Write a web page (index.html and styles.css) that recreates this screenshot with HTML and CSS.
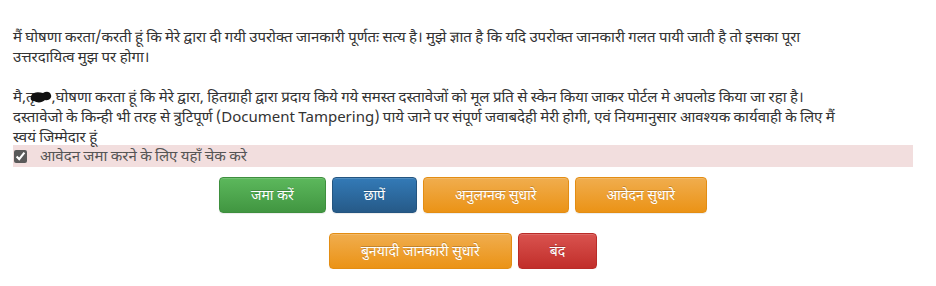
FILE: index.html
```html
<!DOCTYPE html>
<html lang="hi">
<head>
<meta charset="utf-8">
<title>घोषणा</title>
<link rel="stylesheet" href="styles.css">
</head>
<body>
<div class="panel">
  <p class="declaration">मैं घोषणा करता/करती हूं कि मेरे द्वारा दी गयी उपरोक्त जानकारी पूर्णतः सत्य है। मुझे ज्ञात है कि यदि उपरोक्त जानकारी गलत पायी जाती है तो इसका पूरा<br>उत्तरदायित्व मुझ पर होगा।<br><br>मै,तृ<svg class="blot" viewBox="0 0 22 12" width="22" height="12"><path d="M1 5 C4 0 9 1 13 2 C16 0 20 0 21 4 C22 7 19 10 15 9 C12 12 7 12 4 10 C1 10 0 8 1 5 Z" fill="#111"/></svg>,घोषणा करता हूं कि मेरे द्वारा, हितग्राही द्वारा प्रदाय किये गये समस्त दस्तावेजों को मूल प्रति से स्केन किया जाकर पोर्टल मे अपलोड किया जा रहा है।<br>दस्तावेजो के किन्ही भी तरह से त्रुटिपूर्ण (Document Tampering) पाये जाने पर संपूर्ण जवाबदेही मेरी होगी, एवं नियमानुसार आवश्यक कार्यवाही के लिए मैं<br>स्वयं जिम्मेदार हूं</p>
  <label class="confirm">
    <input type="checkbox" class="confirm-box" checked>
    <span class="confirm-text">आवेदन जमा करने के लिए यहाँ चेक करे</span>
  </label>
  <div class="actions">
    <button class="btn btn-success">जमा करें</button>
    <button class="btn btn-primary">छापें</button>
    <button class="btn btn-warning">अनुलग्नक सुधारे</button>
    <button class="btn btn-warning">आवेदन सुधारे</button>
  </div>
  <div class="actions actions-second">
    <button class="btn btn-warning">बुनयादी जानकारी सुधारे</button>
    <button class="btn btn-danger">बंद</button>
  </div>
</div>
</body>
</html>
```
FILE: styles.css
```css
* { box-sizing: border-box; }
body {
  margin: 0;
  background: #fff;
  font-family: "Noto Sans Devanagari", "Lohit Devanagari", "Noto Sans", "Liberation Sans", sans-serif;
  font-size: 15px;
  line-height: 20px;
  color: #333;
}
.panel {
  width: 900px;
  margin-left: 13px;
  padding-top: 29px;
}
.declaration {
  margin: 0 0 -4px;
  white-space: nowrap;
  word-spacing: -0.5px;
}
.blot {
  display: inline-block;
  vertical-align: -1px;
  margin-left: -5px;
}
.confirm {
  display: flex;
  align-items: center;
  gap: 13px;
  height: 22px;
  background: #f2dede;
  color: #555;
  padding-left: 1px;
}
.confirm-text {
  padding-top: 3px;
  word-spacing: -0.5px;
}
.confirm-box {
  margin: 0;
  width: 13px;
  height: 13px;
  accent-color: #5a5a5a;
}
.actions {
  display: flex;
  justify-content: center;
  gap: 6px;
  margin-top: 10px;
}
.actions-second {
  margin-top: 20px;
}
.btn {
  height: 36px;
  padding: 3px 31px 0;
  border: 1px solid transparent;
  border-radius: 4px;
  font-family: inherit;
  font-size: 14px;
  color: #fff;
  text-shadow: 0 -1px 0 rgba(0,0,0,.2);
  box-shadow: inset 0 1px 0 rgba(255,255,255,.15), 0 1px 1px rgba(0,0,0,.075);
  cursor: pointer;
}
.btn-success { background: linear-gradient(#5cb85c, #419641); border-color: #3e8f3e; }
.btn-primary { background: linear-gradient(#337ab7, #265a88); border-color: #245580; }
.btn-warning { background: linear-gradient(#f0ad4e, #eb9316); border-color: #e38d13; }
.btn-danger { background: linear-gradient(#d9534f, #c12e2a); border-color: #b92c28; }
```
